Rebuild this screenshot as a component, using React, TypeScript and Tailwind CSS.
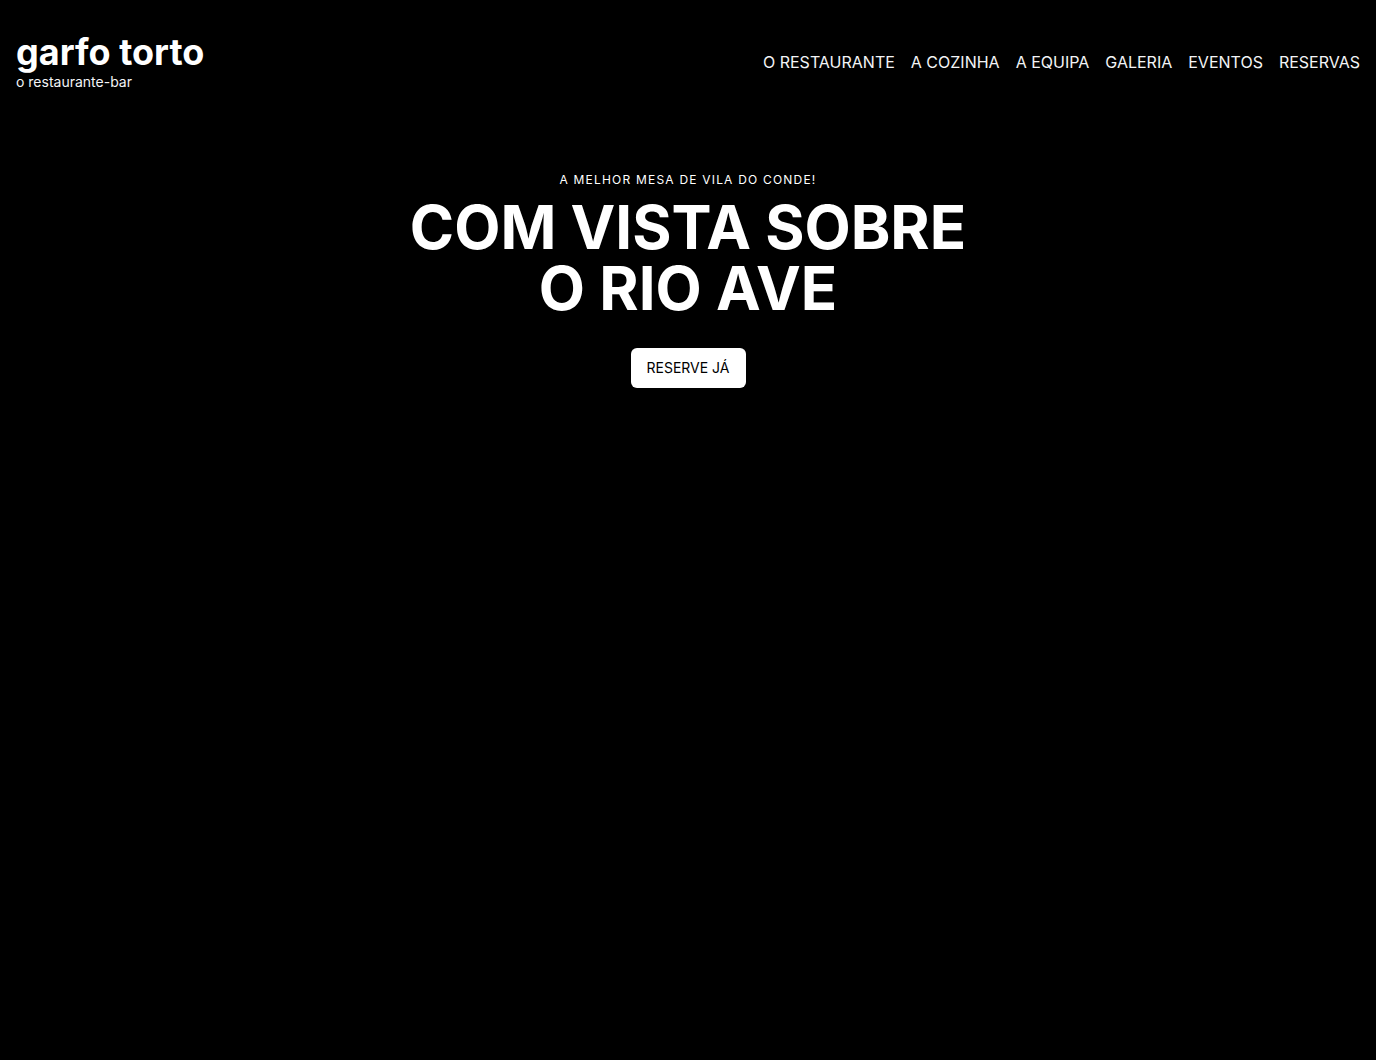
import React from 'react';

const NAV = ['O RESTAURANTE', 'A COZINHA', 'A EQUIPA', 'GALERIA', 'EVENTOS', 'RESERVAS'];

export default function App() {
  return (
    <main className="min-h-[1060px] bg-black text-white antialiased" style={{ fontFamily: 'Inter, "Noto Sans", sans-serif' }}>
      {/* Header */}
      <header className="flex items-center justify-between px-4 pt-8">
        <a href="#" className="flex flex-col">
          <span className="text-4xl font-bold leading-10">garfo torto</span>
          <span className="text-sm leading-5 text-gray-100">o restaurante-bar</span>
        </a>
        <nav className="flex items-center gap-4">
          {NAV.map((item) => (
            <a key={item} href="#" className="text-base text-gray-100 hover:text-white">
              {item}
            </a>
          ))}
        </nav>
      </header>

      {/* Hero */}
      <section className="flex flex-col items-center pt-[80px] text-center">
        <p className="text-xs tracking-widest">A MELHOR MESA DE VILA DO CONDE!</p>
        <h1 className="mt-[9px] text-6xl font-bold leading-[61px]">
          COM VISTA SOBRE
          <br />
          O RIO AVE
        </h1>
        <button className="mt-[29px] rounded-md bg-white px-4 py-2.5 text-sm text-black">RESERVE JÁ</button>
      </section>
    </main>
  );
}
